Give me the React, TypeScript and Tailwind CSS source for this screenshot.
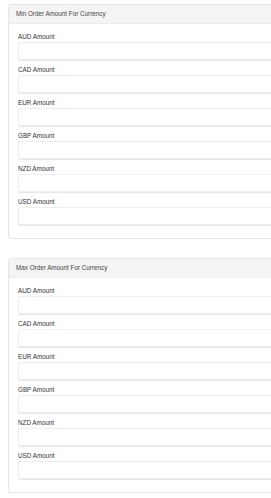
const currencies = ['AUD', 'CAD', 'EUR', 'GBP', 'NZD', 'USD']

function AmountField({ code }: { code: string }) {
  return (
    <div className="flex flex-col">
      <label className="h-[9px] text-[6.3px] leading-[9px] text-[#333]">
        {code} Amount
      </label>
      <input
        type="text"
        className="mt-[1px] h-[18px] w-full rounded-[2px] border border-[#eeeeee] bg-white shadow-[0_1px_1px_rgba(0,0,0,0.1)] outline-none"
      />
    </div>
  )
}

function CurrencyCard({ title }: { title: string }) {
  return (
    <div className="w-[300px] overflow-hidden rounded-[3px] border border-[#e6e6e6] bg-white">
      <div className="flex h-[19px] items-center border-b border-[#ececec] bg-[#f4f4f4] px-[7px] text-[6.3px] text-[#444]">
        {title}
      </div>
      <div className="flex flex-col gap-[5px] pb-[13px] pl-[9px] pt-[8px]">
        {currencies.map((c) => (
          <AmountField key={c} code={c} />
        ))}
      </div>
    </div>
  )
}

export default function App() {
  return (
    <div
      className="flex h-[498px] w-[271px] flex-col gap-[19px] overflow-hidden bg-white pl-[8px] pt-[4px]"
      style={{ fontFamily: '"Liberation Sans", Arial, sans-serif' }}
    >
      <CurrencyCard title="Min Order Amount For Currency" />
      <CurrencyCard title="Max Order Amount For Currency" />
    </div>
  )
}
